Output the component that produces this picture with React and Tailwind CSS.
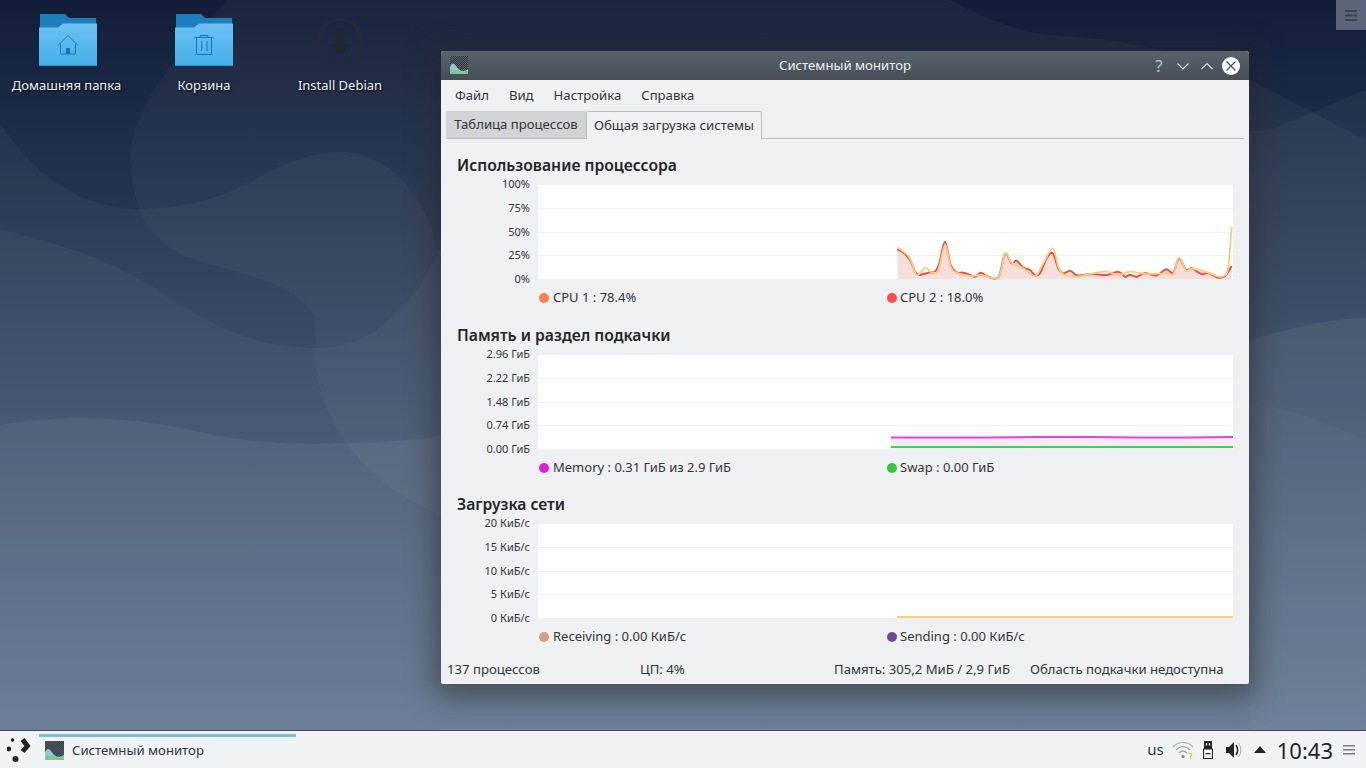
import React from 'react';

const cpu2 = [[52,148],[70,158],[90,180],[110,222],[130,222],[150,217],[165,215],[178,190],[195,125],[212,195],[230,217],[250,218],[270,225],[285,230],[303,218],[320,228],[355,232],[375,162],[395,190],[410,182],[430,203],[450,210],[465,226],[480,220],[500,175],[518,160],[535,205],[550,220],[570,212],[590,226],[610,225],[640,222],[680,225],[715,215],[735,230],[750,224],[770,230],[795,220],[830,226],[858,208],[880,218],[897,175],[918,210],[935,205],[965,222],[985,219],[1015,233],[1035,228],[1055,198]];
const cpu1 = [[52,142],[70,155],[90,175],[110,225],[135,203],[155,217],[175,210],[195,135],[212,200],[230,218],[270,228],[303,225],[355,232],[375,160],[395,188],[430,205],[465,228],[490,190],[518,145],[535,200],[550,222],[590,230],[640,220],[680,215],[715,225],[750,215],[795,222],[858,220],[880,222],[897,172],[918,212],[935,206],[985,218],[1015,230],[1035,226],[1045,200],[1055,80]];

// zoomed crop coords to chart coords
const toChart = (pts) => pts.map(([x, y]) => [342 + x / 3, 15 + y / 3]);

function smooth(pts) {
  let d = `M${pts[0][0]},${pts[0][1]}`;
  for (let i = 0; i < pts.length - 1; i++) {
    const p0 = pts[i - 1] || pts[i];
    const p1 = pts[i];
    const p2 = pts[i + 1];
    const p3 = pts[i + 2] || p2;
    const c1 = [p1[0] + (p2[0] - p0[0]) / 6, p1[1] + (p2[1] - p0[1]) / 6];
    const c2 = [p2[0] - (p3[0] - p1[0]) / 6, p2[1] - (p3[1] - p1[1]) / 6];
    d += ` C${c1[0].toFixed(1)},${c1[1].toFixed(1)} ${c2[0].toFixed(1)},${c2[1].toFixed(1)} ${p2[0].toFixed(1)},${p2[1].toFixed(1)}`;
  }
  return d;
}

function Wallpaper() {
  return (
    <svg className="absolute inset-0" width="1366" height="730" viewBox="0 0 1366 730">
      <defs>
        <linearGradient id="wall" x1="0" y1="0" x2="0" y2="1">
          <stop offset="0" stopColor="#121e39" />
          <stop offset="1" stopColor="#586d8b" />
        </linearGradient>
      </defs>
      <rect width="1366" height="730" fill="url(#wall)" />
      <path d="M0,123 C40,185 90,209 140,209 C190,209 225,195 250,182 C280,165 310,152 340,152 C385,152 425,190 437,250 L900,300 L1250,80 L1366,140 L1366,730 L0,730 Z" fill="#fff" fillOpacity="0.04" />
      <path d="M228,0 C170,60 125,120 131,165 C133,215 155,245 190,258 C230,272 290,280 312,312 C320,335 312,350 315,360 C320,420 360,480 440,515 L1000,600 L1250,300 L1250,80 C1200,55 1120,38 1050,35 C1010,30 980,15 950,0 Z" fill="#fff" fillOpacity="0.035" />
      <path d="M0,230 C70,245 120,265 165,295 C220,330 260,348 315,348 C370,350 410,310 440,250 L800,150 L1270,130 L1366,90 L1366,730 L0,730 Z" fill="#fff" fillOpacity="0.04" />
      <path d="M0,425 C60,415 120,415 190,430 C260,445 310,445 345,443 C400,442 430,438 445,435 L1000,420 L1250,340 C1300,325 1340,318 1366,318 L1366,730 L0,730 Z" fill="#fff" fillOpacity="0.06" />
      <path d="M1250,403 C1300,410 1340,430 1366,440 L1366,730 L1250,730 Z" fill="#fff" fillOpacity="0.025" />
    </svg>
  );
}

function Folder({ id, children }) {
  return (
    <svg width="58" height="52" viewBox="0 0 58 52">
      <defs>
        <linearGradient id={id} x1="0" y1="0" x2="0" y2="1">
          <stop offset="0" stopColor="#6cc1f3" />
          <stop offset="1" stopColor="#45aee9" />
        </linearGradient>
      </defs>
      <path d="M1,0 H26 L30,4 H57 V16 H1 Z" fill="#1c7ebb" />
      <path d="M0,13.5 H19 L24,9.5 H58 V52 H0 Z" fill={`url(#${id})`} />
      <rect y="51" width="58" height="1" fill="#2f93cf" />
      {children}
    </svg>
  );
}

function DesktopIcon({ left, width, label, children }) {
  return (
    <div className="absolute top-[14px] flex flex-col items-center" style={{ left, width }}>
      <div className="h-[52px] flex items-center justify-center">{children}</div>
      <div className="mt-[10px] text-[13px] leading-[18px] text-[#eff0f1] whitespace-nowrap [text-shadow:1px_1px_2px_rgba(0,0,0,0.8)]">{label}</div>
    </div>
  );
}

function MonitorIcon({ id, size }) {
  return (
    <svg width={size} height={size} viewBox="0 0 18 18">
      <defs>
        <pattern id={id} width="2" height="2" patternUnits="userSpaceOnUse">
          <rect width="2" height="2" fill="#2f373e" />
          <rect width="1" height="1" fill="#59626a" />
          <rect x="1" y="1" width="1" height="1" fill="#59626a" />
        </pattern>
      </defs>
      <rect width="18" height="18" fill={`url(#${id})`} />
      <path d="M0,18 V11 C2,6 4,7 6,10 C8,13 10,15 13,15 C15,15 17,14 18,13 V18 Z" fill="#93c8d2" />
      <path d="M0,18 V14 H6 C8,14 10,15 13,16 L18,15 V18 Z" fill="#7fc78e" />
    </svg>
  );
}

function Chart({ children }) {
  return (
    <svg width="695" height="95" viewBox="0 0 695 95" className="block bg-white mt-[9px]">
      {[23, 47, 70, 94].map((y) => (
        <rect key={y} x="0" y={y} width="695" height="1" fill="#eff0f1" />
      ))}
      {children}
    </svg>
  );
}

function Section({ title, labels, legend, chart, height }) {
  return (
    <div className="flex flex-col shrink-0" style={{ height }}>
      <h2 className="h-[23px] ml-[16px] text-[15.7px] leading-[25px] font-semibold text-[#232629]">{title}</h2>
      <div className="flex gap-2">
        <div className="w-[89px] h-[111px] flex flex-col justify-between items-end text-[11px] leading-4 text-[#31363b]">
          {labels.map((l) => (
            <span key={l}>{l}</span>
          ))}
        </div>
        <div>{chart}</div>
      </div>
      <div className="h-[22px] pl-[98px] flex items-center text-[13px] text-[#31363b]">
        <div className="w-[348px] flex items-center gap-1">
          <span className="w-[10px] h-[10px] rounded-full" style={{ background: legend[0].color }} />
          <span>{legend[0].text}</span>
        </div>
        <div className="flex items-center gap-[3px]">
          <span className="w-[10px] h-[10px] rounded-full" style={{ background: legend[1].color }} />
          <span>{legend[1].text}</span>
        </div>
      </div>
    </div>
  );
}

function SystemMonitor() {
  const red = toChart(cpu2);
  const orange = toChart(cpu1);
  const fill = `${smooth(red)} L${red[red.length - 1][0]},94 L${red[0][0]},94 Z`;
  return (
    <div className="absolute left-[441px] top-[51px] w-[808px] h-[633px] flex flex-col rounded-t-[3px] rounded-b-[2px] bg-[#eff0f1] shadow-[0_6px_28px_6px_rgba(40,40,40,0.55)] overflow-hidden">
      <div className="h-[29px] shrink-0 relative flex items-center justify-center bg-gradient-to-b from-[#5a646d] to-[#454e57] text-[13.15px] text-[#eff0f1]">
        <div className="absolute left-[9px] top-[5px]">
          <MonitorIcon id="dither-title" size={18} />
        </div>
        <span>Системный монитор</span>
        <div className="absolute right-[9px] top-0 h-[29px] flex items-center">
          <span className="w-[24px] text-center text-[17px] leading-none text-[#bcc4cc]">?</span>
          <svg width="24" height="14" viewBox="0 0 24 14" fill="none" stroke="#dfe3e6" strokeWidth="1.1">
            <path d="M6.5,4.5 L12,10 L17.5,4.5" />
          </svg>
          <svg width="24" height="14" viewBox="0 0 24 14" fill="none" stroke="#dfe3e6" strokeWidth="1.1">
            <path d="M6.5,10 L12,4.5 L17.5,10" />
          </svg>
          <svg width="18" height="18" viewBox="0 0 18 18" className="ml-[3px]">
            <circle cx="9" cy="9" r="9" fill="#fff" />
            <path d="M4.5,4.5 L13.5,13.5 M13.5,4.5 L4.5,13.5" stroke="#454e57" strokeWidth="1.3" />
          </svg>
        </div>
      </div>

      <div className="h-[31px] shrink-0 flex items-center pl-[14px] gap-[20px] text-[13.15px] text-[#31363b]">
        <span>Файл</span>
        <span>Вид</span>
        <span>Настройка</span>
        <span>Справка</span>
      </div>

      <div className="h-[28px] shrink-0 flex mx-[5px] border-b border-[#bcbebf] text-[13.15px] text-[#31363b]">
        <div className="w-[140px] bg-[#d2d3d4] flex items-center justify-center rounded-tl-[2px]">Таблица процессов</div>
        <div className="w-[176px] h-[28px] bg-[#eff0f1] border border-b-0 border-[#bcbebf] rounded-t-[2px] flex items-center justify-center">Общая загрузка системы</div>
      </div>

      <div className="h-[14px] shrink-0" />

      <Section
        height={170}
        title="Использование процессора"
        labels={['100%', '75%', '50%', '25%', '0%']}
        legend={[
          { color: '#f7814f', text: 'CPU 1 : 78.4%' },
          { color: '#f44f4a', text: 'CPU 2 : 18.0%' },
        ]}
        chart={
          <Chart>
            <path d={fill} fill="#f5dfdb" />
            <path d={smooth(red)} fill="none" stroke="#e0524a" strokeWidth="2" />
            <path d={smooth(orange)} fill="none" stroke="#f9cb80" strokeWidth="1.8" />
          </Chart>
        }
      />
      <Section
        height={169}
        title="Память и раздел подкачки"
        labels={['2.96 ГиБ', '2.22 ГиБ', '1.48 ГиБ', '0.74 ГиБ', '0.00 ГиБ']}
        legend={[
          { color: '#de1fde', text: 'Memory : 0.31 ГиБ из 2.9 ГиБ' },
          { color: '#2fc83f', text: 'Swap : 0.00 ГиБ' },
        ]}
        chart={
          <Chart>
            <rect x="353" y="83" width="342" height="8" fill="#fbe8fb" />
            <path d="M353,82.4 H450 L500,82.1 H550 L600,82.5 H650 L695,82" fill="none" stroke="#dd45dd" strokeWidth="2" />
            <rect x="353" y="91" width="342" height="2" fill="#36dd36" />
          </Chart>
        }
      />
      <Section
        height={169}
        title="Загрузка сети"
        labels={['20 КиБ/с', '15 КиБ/с', '10 КиБ/с', '5 КиБ/с', '0 КиБ/с']}
        legend={[
          { color: '#d0a080', text: 'Receiving : 0.00 КиБ/с' },
          { color: '#6f4a96', text: 'Sending : 0.00 КиБ/с' },
        ]}
        chart={
          <Chart>
            <rect x="359" y="92" width="336" height="2" fill="#f9d27a" />
          </Chart>
        }
      />

      <div className="flex-1 flex items-start pl-[6px] text-[13.15px] leading-4 text-[#31363b]">
        <span className="w-[193px]">137 процессов</span>
        <span className="w-[194px]">ЦП: 4%</span>
        <span className="w-[196px]">Память: 305,2 МиБ / 2,9 ГиБ</span>
        <span>Область подкачки недоступна</span>
      </div>
    </div>
  );
}

function Taskbar() {
  return (
    <div className="h-[38px] shrink-0 flex items-stretch bg-[#eff3f6] border-t border-[#3f4b5e] text-[#31363b]">
      <div className="w-[39px] flex items-center justify-center">
        <svg width="26" height="28" viewBox="0 0 26 28" fill="#232629">
          <circle cx="5.5" cy="4" r="1.8" />
          <circle cx="1.8" cy="13" r="2.4" />
          <circle cx="8.5" cy="23" r="3" />
          <path d="M13.5,5 L17.5,2 L23.5,10 L17.5,17 L13.5,14 L17.5,10 Z" />
        </svg>
      </div>
      <div className="w-[257px] relative flex items-center pl-[6px] gap-2 text-[13.15px] pt-[2px]">
        <div className="absolute top-[3px] left-0 right-0 h-[3px] bg-[#78bfe2]" />
        <MonitorIcon id="dither-task" size={19} />
        <span>Системный монитор</span>
      </div>
      <div className="flex-1 flex items-center justify-end pr-[11px]">
        <span className="text-[15px] mr-[8px]">us</span>
        <svg width="22" height="20" viewBox="0 0 22 20" fill="none" stroke="#a3a9ae" strokeWidth="1.2" className="mr-[9px]">
          <path d="M1,7 C6,1 16,1 21,7" />
          <path d="M4,10 C8,5.5 14,5.5 18,10" />
          <path d="M7,13 C9.5,10.5 12.5,10.5 15,13" />
          <circle cx="11" cy="16.5" r="1.6" fill="#7a8288" stroke="none" />
          <path d="M17,14 C18,13 20,13.5 19.6,15 C19.3,16 18.4,16 18.4,17.2 M18.4,18.4 V19.4" stroke="#f6b73c" />
        </svg>
        <svg width="10" height="18" viewBox="0 0 10 18" className="mr-[13px]">
          <rect x="1" y="0" width="8" height="8" fill="#232629" />
          <rect x="2.8" y="2" width="1.4" height="2.4" fill="#eff3f6" />
          <rect x="5.8" y="2" width="1.4" height="2.4" fill="#eff3f6" />
          <rect x="0.5" y="8" width="9" height="9.5" fill="none" stroke="#232629" />
          <rect x="2.5" y="12" width="5" height="1.2" fill="#232629" />
        </svg>
        <svg width="16" height="18" viewBox="0 0 16 18" className="mr-[12px]">
          <path d="M0,6 H3 L8,1 V17 L3,12 H0 Z" fill="#232629" />
          <path d="M10,4 C12,7 12,11 10,14" fill="none" stroke="#232629" strokeWidth="1.5" />
          <path d="M12.5,2 C15.5,6 15.5,12 12.5,16" fill="none" stroke="#a3a9ae" strokeWidth="1" />
        </svg>
        <svg width="12" height="7" viewBox="0 0 12 7" className="mr-[11px]">
          <path d="M0,7 L6,0 L12,7 Z" fill="#232629" />
        </svg>
        <span className="text-[22px] leading-none text-[#232629] mr-[10px]">10:43</span>
        <svg width="12" height="10" viewBox="0 0 12 10" fill="#7b8088">
          <rect width="12" height="1.5" />
          <rect y="4" width="12" height="1.5" />
          <rect y="8" width="12" height="1.5" />
        </svg>
      </div>
    </div>
  );
}

export default function App() {
  return (
    <div className="w-[1366px] h-[768px] flex flex-col overflow-hidden font-['Noto_Sans',sans-serif]">
      <div className="flex-1 relative overflow-hidden">
        <Wallpaper />

        <DesktopIcon left={6} width={121} label="Домашняя папка">
          <div className="ml-[2px]">
            <Folder id="folder-home">
              <path d="M29,21.5 L19,31.5 M29,21.5 L39,31.5 M21.5,29.5 V40 H36.5 V29.5" fill="none" stroke="#1279b5" strokeWidth="1" />
              <rect x="27" y="34" width="4" height="6" fill="#1279b5" />
            </Folder>
          </div>
        </DesktopIcon>
        <DesktopIcon left={144} width={120} label="Корзина">
          <Folder id="folder-trash">
            <path d="M19.5,23.5 H38.5 M25,23.5 V21.5 H33 V23.5 M21.5,23.5 V40.5 H36.5 V23.5 M26.7,27 V37 M32,27 V37" fill="none" stroke="#1279b5" strokeWidth="1" />
          </Folder>
        </DesktopIcon>
        <DesktopIcon left={280} width={120} label="Install Debian">
          <svg width="48" height="48" viewBox="0 0 48 48" className="mt-[2px]">
            <circle cx="24" cy="24" r="21.5" fill="none" stroke="#232b3a" strokeWidth="3" />
            <path d="M20,12 H28 V27 H33 L24,39 L15,27 H20 Z" fill="#1f2733" />
          </svg>
        </DesktopIcon>

        <div className="absolute right-0 top-0 w-[30px] h-[30px] bg-[#5a6579] flex items-center justify-center">
          <svg width="12" height="11" viewBox="0 0 12 11" fill="#3a4354">
            <rect width="12" height="2" />
            <rect y="4.5" width="12" height="2" />
            <rect y="9" width="12" height="2" />
          </svg>
        </div>

        <SystemMonitor />
      </div>
      <Taskbar />
    </div>
  );
}
